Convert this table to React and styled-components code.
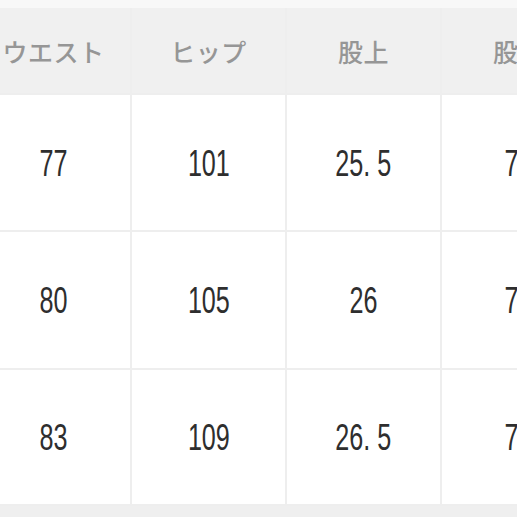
import React from "react";
import styled, { createGlobalStyle } from "styled-components";

const Global = createGlobalStyle`
  html, body {
    margin: 0;
    padding: 0;
    background: #f8f8f8;
    overflow: hidden;
  }
`;

const Page = styled.div`
  width: 517px;
  height: 517px;
  overflow: hidden;
  padding-top: 8px;
  box-sizing: border-box;
  background: #f8f8f8;
`;

const Table = styled.div`
  display: grid;
  grid-template-columns: repeat(4, 153px);
  grid-template-rows: 85px 135px 136px 134px;
  column-gap: 2px;
  row-gap: 2px;
  margin-left: -23px;
  width: 620px;
  background: #eeeeee;
  border-bottom: 2px solid #eeeeee;
`;

const HeadCell = styled.div`
  display: flex;
  align-items: center;
  justify-content: center;
  background: #f0f0f0;
  color: #969696;
  font-family: "Noto Sans CJK JP", sans-serif;
  font-weight: 500;
  font-size: 25px;
  letter-spacing: 0.5px;
`;

const Cell = styled.div`
  display: flex;
  align-items: center;
  justify-content: center;
  background: #ffffff;
  color: #2e2e2e;
  font-family: "Liberation Sans", Arial, sans-serif;
  font-size: 37px;
  padding-top: 2px;
`;

const Digits = styled.span`
  display: inline-block;
  white-space: pre;
  transform: scaleX(0.68);
`;

const Footer = styled.div`
  height: 20px;
  background: #efefef;
`;

const heads = ["ウエスト", "ヒップ", "股上", "股下"];
const rows = [
  ["77", "101", "25. 5", "76"],
  ["80", "105", "26", "76"],
  ["83", "109", "26. 5", "76"],
];

export default function App() {
  return (
    <Page>
      <Global />
      <Table>
        {heads.map((h) => (
          <HeadCell key={h}>{h}</HeadCell>
        ))}
        {rows.map((r, i) =>
          r.map((v, j) => (
            <Cell key={i + "-" + j}>
              <Digits>{v}</Digits>
            </Cell>
          ))
        )}
      </Table>
      <Footer />
    </Page>
  );
}
